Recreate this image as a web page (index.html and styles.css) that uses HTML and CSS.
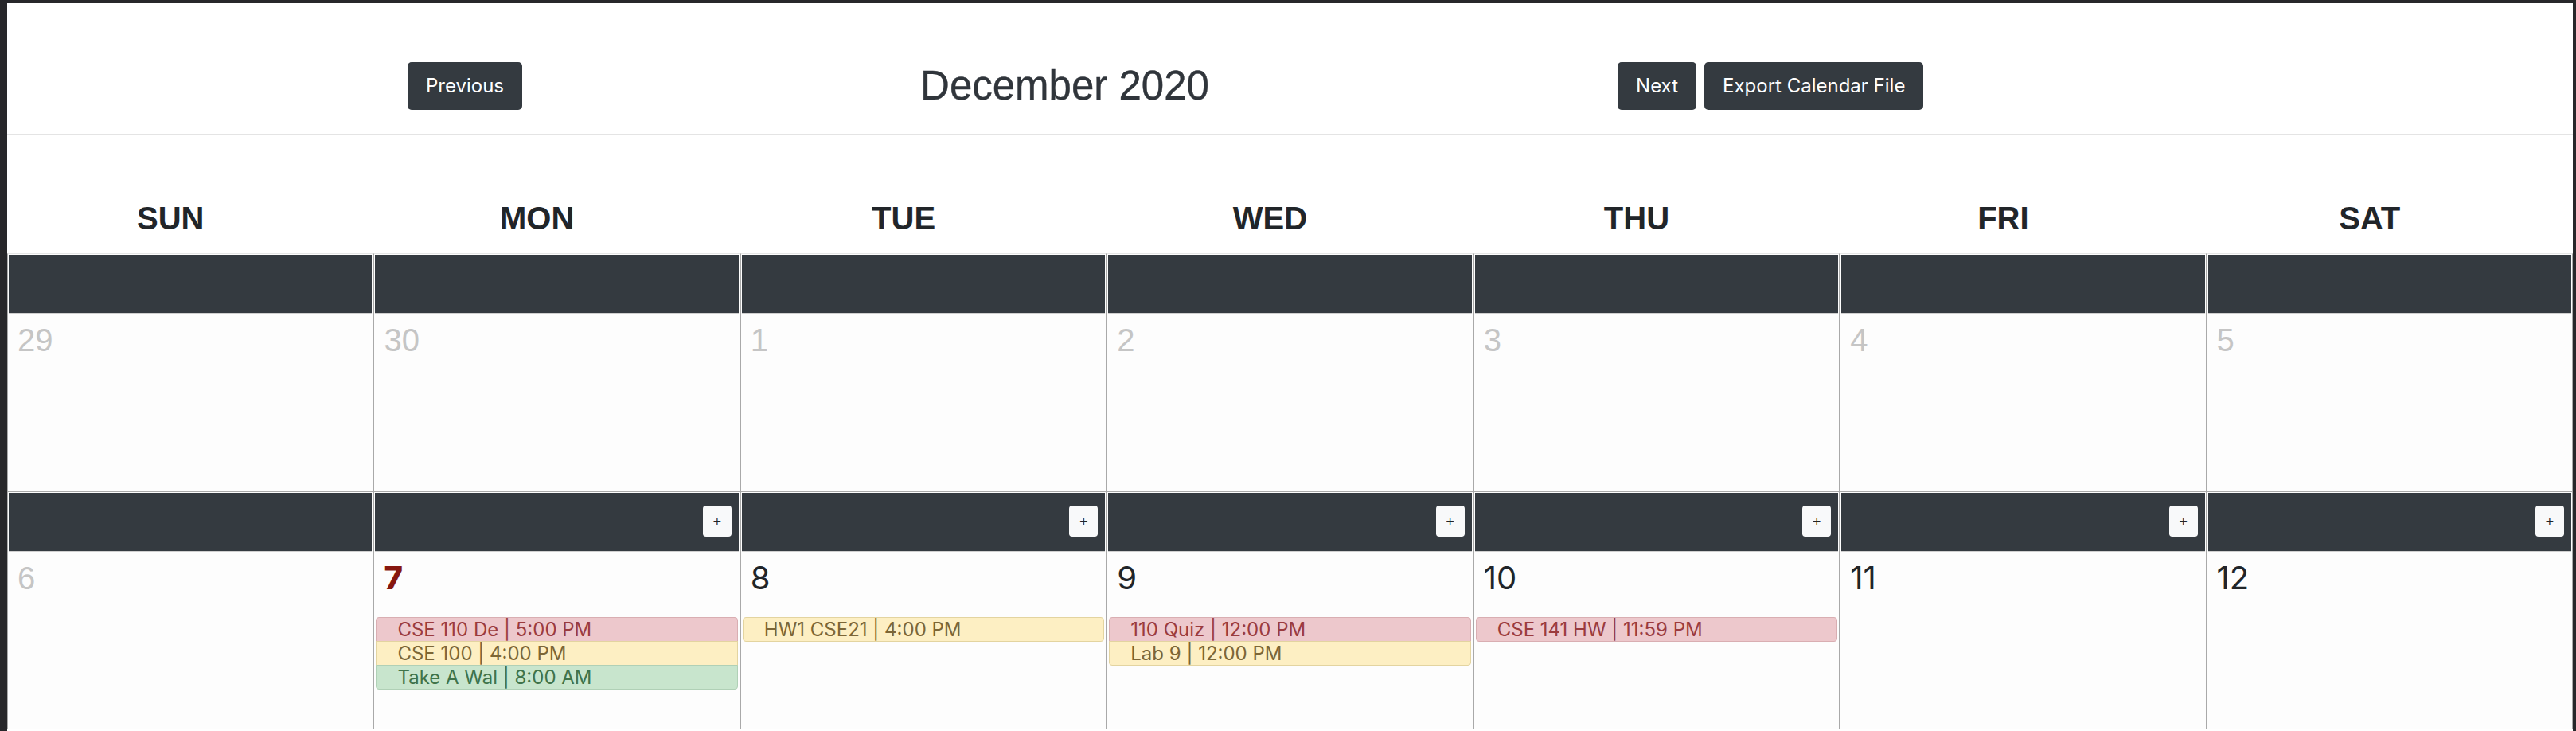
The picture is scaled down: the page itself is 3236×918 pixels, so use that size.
FILE: index.html
```html
<!DOCTYPE html>
<html lang="en">
<head>
<meta charset="utf-8">
<title>Calendar</title>
<link rel="stylesheet" href="styles.css">
</head>
<body>
<div class="page">
  <header class="topbar">
    <button class="btn btn-prev">Previous</button>
    <h1 class="title">December 2020</h1>
    <div class="btn-group">
      <button class="btn">Next</button>
      <button class="btn">Export Calendar File</button>
    </div>
  </header>

  <div class="daynames">
    <div class="dayname">SUN</div>
    <div class="dayname">MON</div>
    <div class="dayname">TUE</div>
    <div class="dayname">WED</div>
    <div class="dayname">THU</div>
    <div class="dayname">FRI</div>
    <div class="dayname">SAT</div>
  </div>

  <div class="week week-first">
    <div class="cell"><div class="bar"></div><div class="num muted">29</div></div>
    <div class="cell"><div class="bar"></div><div class="num muted">30</div></div>
    <div class="cell"><div class="bar"></div><div class="num muted">1</div></div>
    <div class="cell"><div class="bar"></div><div class="num muted">2</div></div>
    <div class="cell"><div class="bar"></div><div class="num muted">3</div></div>
    <div class="cell"><div class="bar"></div><div class="num muted">4</div></div>
    <div class="cell"><div class="bar"></div><div class="num muted">5</div></div>
  </div>

  <div class="week">
    <div class="cell"><div class="bar"></div><div class="num muted">6</div></div>
    <div class="cell">
      <div class="bar"><button class="add">+</button></div>
      <div class="num today">7</div>
      <ul class="events">
        <li class="ev ev-red">CSE 110 De | 5:00 PM</li>
        <li class="ev ev-yellow">CSE 100 | 4:00 PM</li>
        <li class="ev ev-green">Take A Wal | 8:00 AM</li>
      </ul>
    </div>
    <div class="cell">
      <div class="bar"><button class="add">+</button></div>
      <div class="num">8</div>
      <ul class="events">
        <li class="ev ev-yellow">HW1 CSE21 | 4:00 PM</li>
      </ul>
    </div>
    <div class="cell">
      <div class="bar"><button class="add">+</button></div>
      <div class="num">9</div>
      <ul class="events">
        <li class="ev ev-red">110 Quiz | 12:00 PM</li>
        <li class="ev ev-yellow">Lab 9 | 12:00 PM</li>
      </ul>
    </div>
    <div class="cell">
      <div class="bar"><button class="add">+</button></div>
      <div class="num">10</div>
      <ul class="events">
        <li class="ev ev-red">CSE 141 HW | 11:59 PM</li>
      </ul>
    </div>
    <div class="cell">
      <div class="bar"><button class="add">+</button></div>
      <div class="num">11</div>
    </div>
    <div class="cell">
      <div class="bar"><button class="add">+</button></div>
      <div class="num">12</div>
    </div>
  </div>
</div>
</body>
</html>
```
FILE: styles.css
```css
* {
  box-sizing: border-box;
}

html, body {
  margin: 0;
  padding: 0;
  height: 918px;
  overflow: hidden;
  background: #27272a;
}

.page {
  margin: 4px 4px 0 9px;
  height: 914px;
  background: #ffffff;
  font-family: Inter, "Liberation Sans", sans-serif;
  color: #212529;
  overflow: hidden;
}

/* ---------- top bar ---------- */
.topbar {
  display: flex;
  align-items: center;
  padding: 74px 0 30px 503px;
  border-bottom: 2px solid #e4e4e4;
}

.btn {
  height: 60px;
  padding: 0 23px;
  border: none;
  border-radius: 5px;
  background: #343a40;
  color: #ffffff;
  font-family: Inter, "Liberation Sans", sans-serif;
  font-size: 24px;
  font-weight: 400;
  line-height: 60px;
}

.title {
  margin: 0 0 0 500px;
  flex: 0 0 876px;
  font-family: "Liberation Sans", Arial, sans-serif;
  font-size: 51px;
  font-weight: 400;
  line-height: 60px;
  color: #30353b;
  -webkit-text-stroke: 0.4px #30353b;
}

.btn-group {
  display: flex;
  gap: 10px;
}

/* ---------- day names ---------- */
.daynames {
  display: grid;
  grid-template-columns: repeat(7, 1fr);
  padding-top: 80px;
  margin-bottom: 20px;
}

.dayname {
  text-align: center;
  padding-right: 50px;
  font-family: "Liberation Sans", Arial, sans-serif;
  font-size: 40px;
  font-weight: 700;
  line-height: 48px;
  color: #212529;
}

/* ---------- weeks ---------- */
.week {
  display: grid;
  grid-template-columns: repeat(7, 1fr);
}

.cell {
  height: 299px;
  border: 1px solid #a9a9a9;
  background: #fdfdfd;
}

.week-first .cell {
  border-top-color: #e6e6e6;
}

.bar {
  height: 74px;
  margin: 1px 1px 0;
  background: #343a40;
  border-bottom: 1px solid #cfcfcf;
  display: flex;
  justify-content: flex-end;
  align-items: center;
  padding: 0 9px 3px 0;
}

.add {
  width: 36px;
  height: 39px;
  padding: 0;
  border: none;
  border-radius: 4px;
  background: #f8f9fa;
  color: #212529;
  font-family: "DejaVu Sans", sans-serif;
  font-size: 14px;
  line-height: 39px;
  text-align: center;
}

.num {
  padding: 9px 0 0 12px;
  font-family: Inter, "Liberation Sans", sans-serif;
  font-size: 40px;
  line-height: 48px;
  color: #212529;
}

.num.muted {
  font-family: "Liberation Sans", Arial, sans-serif;
  color: #c5c5c5;
}

.num.today {
  font-weight: 800;
  color: #86170f;
}

/* ---------- events ---------- */
.events {
  list-style: none;
  margin: 25px 2px 0 2px;
  padding: 0;
  display: flex;
  flex-direction: column;
}

.ev {
  height: 31px;
  padding-left: 26px;
  font-family: Inter, "Liberation Sans", sans-serif;
  font-size: 24px;
  line-height: 29px;
  border: 1px solid;
  margin-top: -1px;
  white-space: nowrap;
}

.ev:first-child {
  margin-top: 0;
  border-top-left-radius: 4px;
  border-top-right-radius: 4px;
}

.ev:last-child {
  border-bottom-left-radius: 4px;
  border-bottom-right-radius: 4px;
}

.ev-red {
  background: #edc8cc;
  border-color: #d9aeb2;
  color: #9b3b3e;
}

.ev-yellow {
  background: #fdefc3;
  border-color: #e3d4a0;
  color: #7c6636;
}

.ev-green {
  background: #c8e5cd;
  border-color: #b0d0b6;
  color: #3f7349;
}
```
